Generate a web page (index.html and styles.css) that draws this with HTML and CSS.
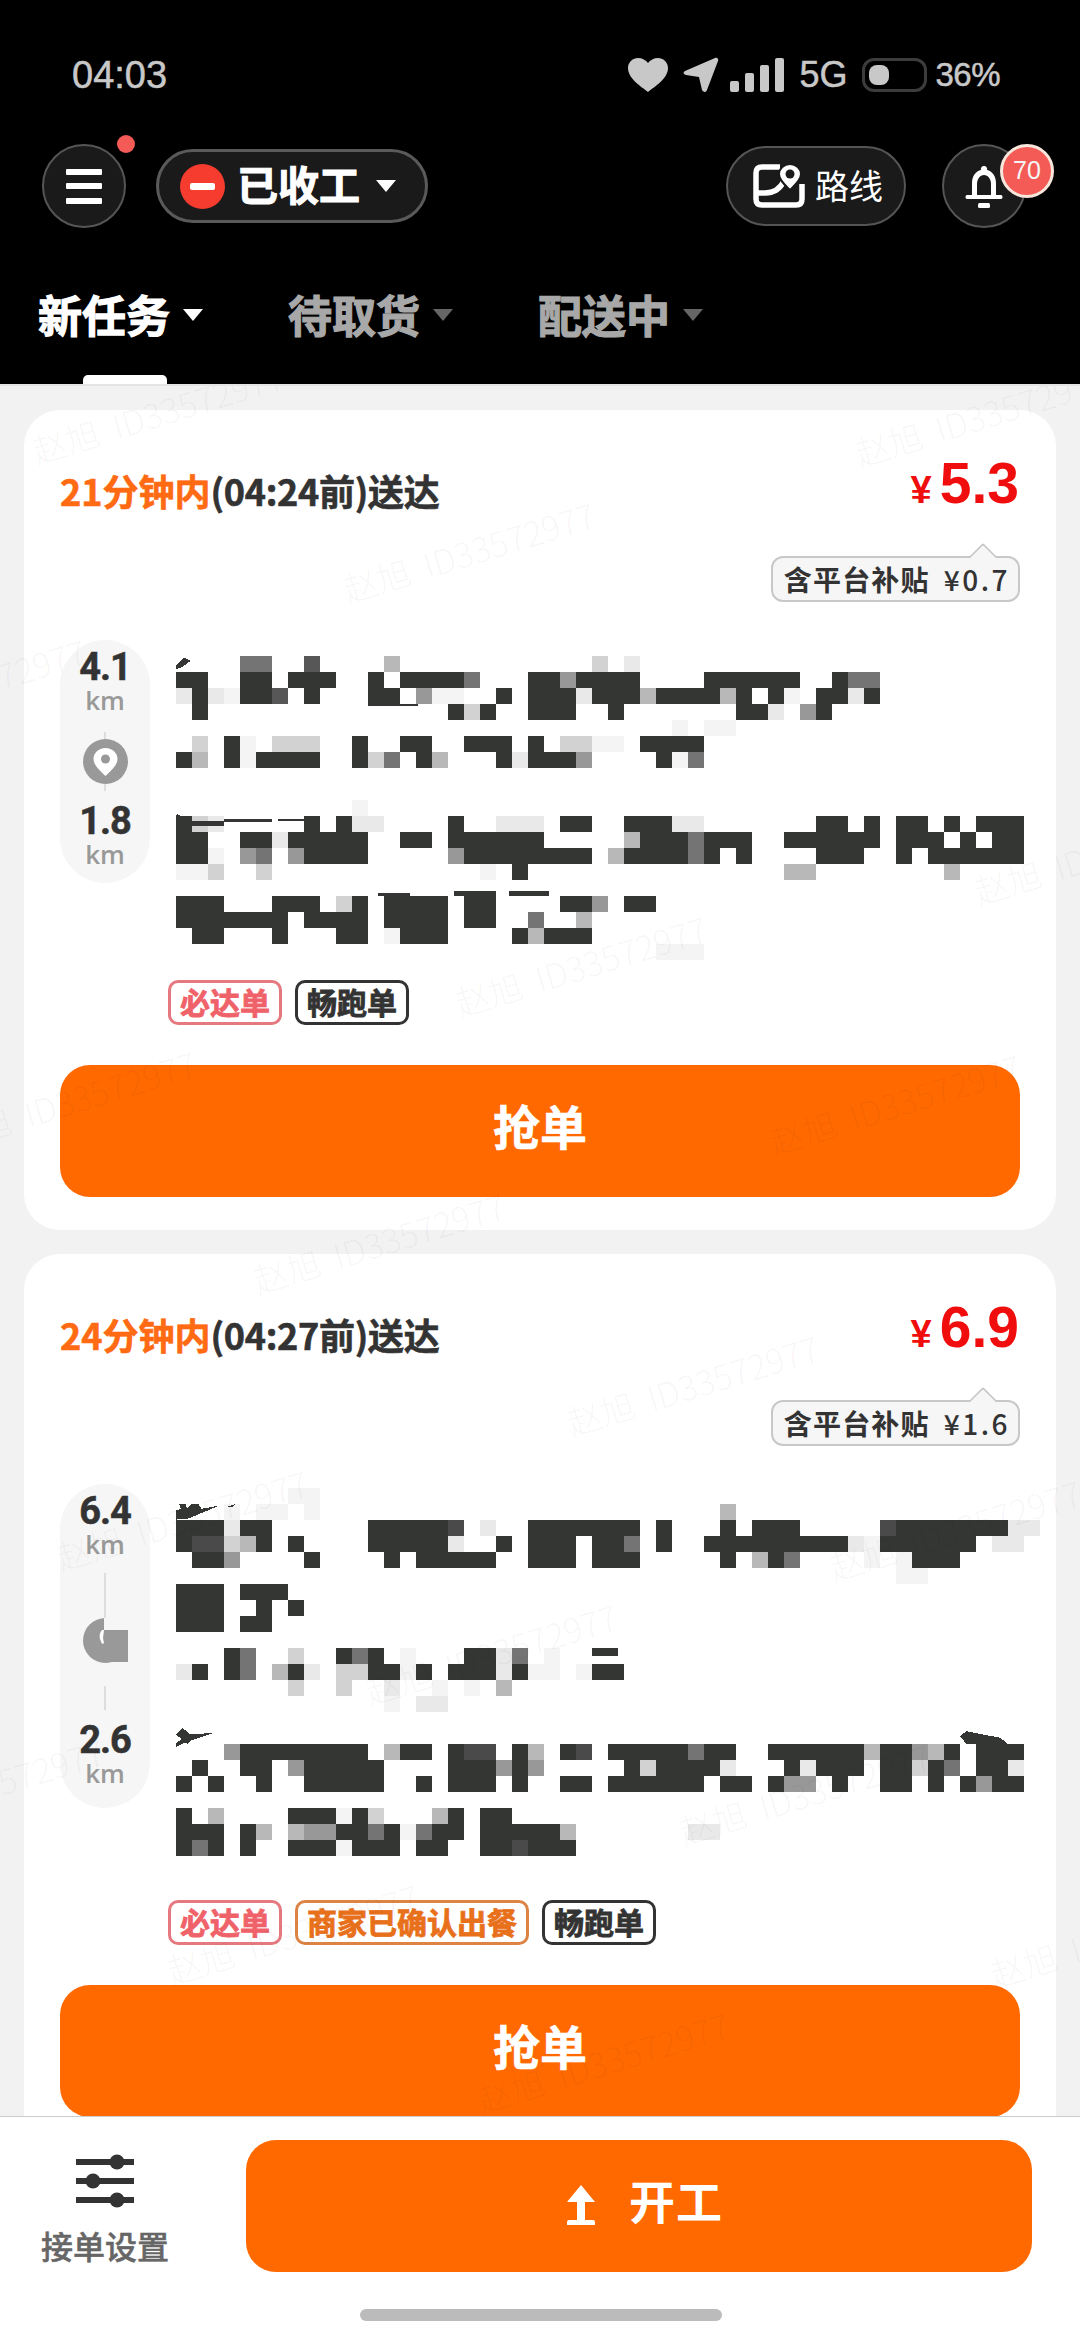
FILE: index.html
```html
<!DOCTYPE html>
<html lang="zh-CN">
  <head>
    <meta charset="UTF-8" />
    <meta name="viewport" content="width=device-width, initial-scale=1.0" />
    <title>新任务</title>
    <link rel="stylesheet" href="styles.css">
  </head>
  <body>
    <div class="phone">
      <header class="top">
        <div class="status">
          <span class="time">04:03</span>
          <div class="status-right">
            <svg class="ic-heart" viewBox="0 0 40 34"><path d="M20 34C14 29 0 21 0 10 0 4 5 0 10 0c4 0 8 2 10 5 2-3 6-5 10-5 5 0 10 4 10 10 0 11-14 19-20 24z"/></svg>
            <svg class="ic-nav" viewBox="0 0 36 36"><path d="M2 14 32 1c2-1 4 1 3 3L24 33c-1 3-4 2-5 0l-3-13-13-2c-3-1-3-3-1-4z"/></svg>
            <div class="signal"><i></i><i></i><i></i><i></i></div>
            <span class="net">5G</span>
            <div class="battery"><i></i></div>
            <span class="pct">36%</span>
          </div>
        </div>

        <div class="toolbar">
          <button class="round menu" type="button">
            <span class="burger"><i></i><i></i><i></i></span>
            <span class="dot"></span>
          </button>
          <button class="state" type="button">
            <span class="minus"><i></i></span>
            <span class="state-text">已收工</span>
            <span class="caret"></span>
          </button>
          <div class="spacer"></div>
          <button class="route-btn" type="button">
            <svg class="ic-map" viewBox="0 0 52 44">
              <path d="M27 3H9Q3 3 3 9v26q0 6 6 6h34q6 0 6-6V20M3 29h9q13 0 19-12" fill="none" stroke="#fff" stroke-width="5.5"/>
              <path d="M37 0c6 0 11 5 11 10 0 6-6 11-11 16-5-5-11-10-11-16 0-5 5-10 11-10z" fill="#fff" stroke="#1a1a1a" stroke-width="2"/>
              <circle cx="37" cy="10" r="4.5" fill="#1a1a1a"/>
            </svg>
            <span>路线</span>
          </button>
          <button class="round bell" type="button">
            <svg class="ic-bell" viewBox="0 0 38 44">
              <path d="M19 2a3 3 0 0 1 3 4c5 1 9 6 9 13v12h5c2 0 2 4 0 4H2c-2 0-2-4 0-4h5V19C7 12 11 7 16 6a3 3 0 0 1 3-4z" fill="#fff"/>
              <path d="M12 31V20c0-5 3-9 7-9s7 4 7 9v11z" fill="#1a1a1a"/>
              <rect x="13" y="39" width="12" height="5" rx="1.5" fill="#fff"/>
            </svg>
            <span class="badge">70</span>
          </button>
        </div>

        <nav class="tabs">
          <a class="tab active">新任务<span class="caret"></span></a>
          <a class="tab">待取货<span class="caret"></span></a>
          <a class="tab">配送中<span class="caret"></span></a>
        </nav>
      </header>

      <main class="feed">
        <article class="card">
          <div class="card-head">
            <h2 class="eta"><em>21分钟内</em>(04:24前)送达</h2>
            <div class="fare">
              <div class="price"><small>¥</small>5.3</div>
              <div class="subsidy">含平台补贴<b>¥0.7</b></div>
            </div>
          </div>
          <div class="route">
            <div class="stats">
              <div class="stat"><strong>4.1</strong><span>km</span></div>
              <div class="stop">
                <i></i>
                <svg class="ic-pin" viewBox="0 0 45 45">
                  <circle cx="22.5" cy="22.5" r="22.5" fill="#999"/>
                  <path d="M22.5 9c7 0 12 5 12 11 0 6-6 11-12 17-6-6-12-11-12-17 0-6 5-11 12-11z" fill="#fff"/>
                  <circle cx="22.5" cy="20" r="4.5" fill="#999"/>
                </svg>
                <i></i>
              </div>
              <div class="stat"><strong>1.8</strong><span>km</span></div>
            </div>
            <!-- address is pixelated in the source, cells are 16px -->
            <svg class="mosaic" width="864" height="320" viewBox="0 -1 54 20" preserveAspectRatio="none">
              <path fill="#f3f4f3" d="M3 2h1v1h-1zM16 2h2v1h-2zM38 2h1v1h-1zM31 4h1v1h-1zM33 4h2v1h-2zM4 5h1v1h-1zM26 5h2v1h-2zM4 6h1v1h-1zM31 6h1v1h-1zM11 9h1v1h-1zM2 12h1v1h-1zM0 13h2v1H0zM19 13h1v1h-1zM13 17h1v1h-1zM30 18h3v1h-3z"/>
              <path fill="#e9e9e9" d="M28 0h1v1h-1zM0 2h1v1H0zM2 2h1v1H2zM25 2h1v1h-1zM42 2h1v1h-1zM37 3h1v1h-1zM21 6h1v1h-1zM2 10h1v1H2zM11 10h2v1h-2zM20 10h3v1h-3zM31 10h2v1h-2zM6 11h1v1H6z"/>
              <path fill="#d2d2d2" d="M26 0h1v1h-1zM18 3h1v1h-1zM1 5h1v1H1zM6 5h3v1H6zM24 5h2v1h-2zM12 6h1v1h-1zM1 10h1v1H1zM2 13h1v1H2zM5 13h1v1H5zM10 15h1v1h-1z"/>
              <path fill="#b8b8b8" d="M13 0h1v1h-1zM29 2h1v1h-1zM34 2h1v1h-1zM1 6h1v1H1zM16 6h1v1h-1zM28 11h1v1h-1zM27 12h1v1h-1zM25 16h1v1h-1zM22 17h1v1h-1zM38 13h2v1h-2zM48 13h1v1h-1z"/>
              <path fill="#979897" d="M24 1h1v1h-1zM15 2h1v1h-1zM39 3h1v1h-1zM25 6h1v1h-1zM4 12h1v1H4zM7 12h1v1H7zM17 12h1v1h-1zM26 15h1v1h-1z"/>
              <path fill="#737473" d="M4 0h2v1H4zM18 1h1v1h-1zM42 1h2v1h-2zM13 6h1v1h-1zM32 6h1v1h-1zM32 11h1v2h-1zM5 12h1v1H5zM22 16h1v1h-1z"/>
              <path fill="#565756" d="M8 0h1v1H8zM6 2h1v1H6z"/>
              <path fill="#343633" d="M0 1h2v1H0zM4 1h2v1H4zM7 1h3v1H7zM12 1h1v1h-1zM14 1h4v1h-4zM22 1h2v1h-2zM25 1h4v1h-4zM33 1h6v1h-6zM41 1h1v1h-1zM1 2h1v1H1zM4 2h2v1H4zM8 2h1v1H8zM12 2h2v1h-2zM20 2h1v1h-1zM22 2h3v1h-3zM26 2h3v1h-3zM30 2h4v1h-4zM35 2h1v1h-1zM37 2h1v1h-1zM40 2h2v1h-2zM43 2h1v1h-1zM1 3h1v1H1zM17 3h1v1h-1zM19 3h1v1h-1zM22 3h3v1h-3zM27 3h1v1h-1zM35 3h2v1h-2zM40 3h1v1h-1zM3 5h1v1H3zM11 5h1v1h-1zM14 5h2v1h-2zM18 5h3v1h-3zM22 5h1v1h-1zM29 5h4v1h-4zM0 6h1v1H0zM3 6h1v1H3zM5 6h4v1H5zM11 6h1v1h-1zM15 6h1v1h-1zM20 6h1v1h-1zM22 6h3v1h-3zM30 6h1v1h-1zM0 10h1v1H0zM8 10h1v1H8zM10 10h1v1h-1zM17 10h1v1h-1zM24 10h2v1h-2zM28 10h3v1h-3zM40 10h2v1h-2zM43 10h1v1h-1zM45 10h2v1h-2zM48 10h1v1h-1zM50 10h3v1h-3zM0 11h2v1H0zM4 11h2v1H4zM7 11h5v1H7zM14 11h2v1h-2zM17 11h6v1h-6zM29 11h3v1h-3zM33 11h3v1h-3zM38 11h6v1h-6zM45 11h3v1h-3zM49 11h1v1h-1zM51 11h2v1h-2zM0 12h2v1H0zM8 12h4v1H8zM18 12h8v1h-8zM28 12h4v1h-4zM33 12h1v1h-1zM35 12h1v1h-1zM40 12h3v1h-3zM45 12h1v1h-1zM47 12h2v1h-2zM49 12h4v1h-4zM21 13h1v1h-1zM0 15h3v1H0zM6 15h3v1H6zM11 15h1v1h-1zM13 15h4v1h-4zM18 15h2v1h-2zM24 15h2v1h-2zM28 15h2v1h-2zM0 16h7v1H0zM8 16h4v1H8zM13 16h4v1h-4zM18 16h2v1h-2zM1 17h2v1H1zM6 17h1v1H6zM10 17h2v1h-2zM14 17h3v1h-3zM21 17h1v1h-1zM23 17h3v1h-3z"/>
              <!-- bits of real glyphs left over the mosaic -->
              <path fill="#343633" d="M-.3 .9.5.1.9.3.4.7zM-.2 10.1.1 9.9 1 10.3H3v.3H1zM3 10.2h3v.2H3zM6.4 10.2h1.6v.1H6.4zM12 3h3.1v.1H12zM12.6 14.8h2v.2h-2zM17.4 14.7h2.6v.3h-2.6zM20.8 14.7h2.5v.3h-2.5z"/>
            </svg>
          </div>
          <ul class="tags">
            <li class="tag tag-red">必达单</li>
            <li class="tag tag-dark">畅跑单</li>
          </ul>
          <button class="grab" type="button">抢单</button>
        </article>

        <article class="card">
          <div class="card-head">
            <h2 class="eta"><em>24分钟内</em>(04:27前)送达</h2>
            <div class="fare">
              <div class="price"><small>¥</small>6.9</div>
              <div class="subsidy">含平台补贴<b>¥1.6</b></div>
            </div>
          </div>
          <div class="route">
            <div class="stats stats-long">
              <div class="stat"><strong>6.4</strong><span>km</span></div>
              <div class="stop">
                <i></i>
                <svg class="ic-pin" viewBox="0 0 45 45">
                  <circle cx="22.5" cy="22.5" r="22.5" fill="#999"/>
                  <path d="M21 0h24v12H21z" fill="#f6f6f6"/>
                  <path d="M19 12c-2 2-3 6-2 9l2 5 2-1-1-5 1-8z" fill="#fff"/>
                  <path d="M21 12h24v32H21z" fill="#999"/>
                </svg>
                <i></i>
              </div>
              <div class="stat"><strong>2.6</strong><span>km</span></div>
            </div>
            <svg class="mosaic" width="864" height="396" viewBox="0 -1.25 54 24.75" preserveAspectRatio="none">
              <path fill="#f3f4f3" d="M7 -1h2v1H7zM3 0h1v1H3zM5 0h2v1H5zM8 0h1v1H8zM43 2h1v1h-1zM43 3h1v1h-1zM45 3h1v1h-1zM45 4h2v1h-2zM14 9h1v1h-1zM23 9h1v1h-1zM14 10h1v1h-1zM22 10h2v1h-2zM25 10h1v1h-1zM16 11h1v1h-1zM18 11h1v1h-1zM13 12h1v1h-1zM10 19h1v1h-1zM14 20h1v1h-1zM10 21h1v1h-1z"/>
              <path fill="#e9e9e9" d="M3 1h1v1H3zM19 1h1v1h-1zM52 1h2v1h-2zM17 2h1v1h-1zM42 2h1v1h-1zM51 2h2v1h-2zM20 9h1v1h-1zM0 10h1v1H0zM8 10h1v1H8zM20 10h1v1h-1zM13 11h1v1h-1zM15 12h2v1h-2zM34 16h1v1h-1zM39 16h1v1h-1zM52 16h1v1h-1zM32 20h2v1h-2z"/>
              <path fill="#d2d2d2" d="M3 2h1v1H3zM7 9h1v1H7zM10 10h2v1h-2zM7 11h1v1H7zM10 11h1v1H10zM29 16h1v1h-1zM46 16h1v1h-1zM12 19h1v1h-1z"/>
              <path fill="#b8b8b8" d="M34 0h1v1h-1zM4 2h1v1H4zM36 3h1v1h-1zM6 10h1v1H6zM20 11h1v1h-1zM13 15h1v1h-1zM22 15h1v1h-1zM43 15h1v1h-1zM47 15h1v1h-1zM2 19h1v1H2zM16 19h1v1h-1zM5 20h1v1H5zM7 20h1v1H7zM24 20h1v1h-1z"/>
              <path fill="#979897" d="M3 3h1v1H3zM3 15h1v1H3zM46 15h1v1h-1zM7 16h1v1H7zM20 16h1v1h-1zM22 16h1v1h-1zM38 17h2v1h-2zM50 17h1v1h-1zM8 20h2v1H8z"/>
              <path fill="#737473" d="M28 2h1v1h-1zM38 3h1v1h-1zM4 9h1v2H4zM11 9h1v1h-1zM21 9h1v1h-1zM32 15h1v1h-1zM48 16h1v1h-1zM12 20h1v1h-1zM15 20h1v1h-1zM1 21h1v1H1z"/>
              <path fill="#494a49" d="M17 1h1v1h-1zM44 1h1v1h-1zM1 2h2v1H1zM18 15h2v1h-2zM25 15h1v1h-1zM21 21h1v1h-1z"/>
              <path fill="#343633" d="M0 1h3v1H0zM4 1h2v1H4zM12 1h5v1h-5zM22 1h7v1h-7zM30 1h1v1h-1zM34 1h1v1h-1zM36 1h3v1h-3zM45 1h7v1h-7zM0 2h1v1H0zM5 2h1v1H5zM7 2h1v1H7zM12 2h5v1h-5zM20 2h1v1h-1zM22 2h3v1h-3zM26 2h2v1h-2zM30 2h1v1h-1zM33 2h9v1h-9zM44 2h6v1h-6zM1 3h2v1H1zM8 3h1v1H8zM13 3h1v1h-1zM15 3h5v1h-5zM22 3h3v1h-3zM26 3h3v1h-3zM34 3h1v1h-1zM37 3h1v1h-1zM46 3h3v1h-3zM0 5h3v1H0zM4 5h3v1H4zM0 6h3v1H0zM5 6h1v1H5zM7 6h1v1H7zM0 7h3v1H0zM4 7h2v1H4zM3 9h1v1H3zM10 9h1v1h-1zM12 9h1v1h-1zM18 9h2v1h-2zM1 10h1v1H1zM3 10h1v1H3zM7 10h1v1H7zM12 10h2v1h-2zM15 10h1v1h-1zM17 10h3v1h-3zM21 10h1v1h-1zM26 10h2v1h-2zM4 15h8v1H4zM14 15h2v1h-2zM17 15h1v1h-1zM21 15h1v1h-1zM24 15h1v1h-1zM27 15h5v1h-5zM33 15h2v1h-2zM37 15h6v1h-6zM44 15h2v1h-2zM48 15h1v1h-1zM50 15h3v1h-3zM1 16h1v1H1zM4 16h2v1H4zM8 16h5v1H8zM17 16h3v1h-3zM21 16h1v1h-1zM28 16h1v1h-1zM30 16h4v1h-4zM38 16h1v1h-1zM40 16h3v1h-3zM44 16h2v1h-2zM47 16h1v1h-1zM50 16h2v1h-2zM0 17h1v1H0zM2 17h1v1H2zM5 17h1v1H5zM8 17h5v1H8zM15 17h1v1h-1zM17 17h3v1h-3zM21 17h1v1h-1zM24 17h2v1h-2zM27 17h6v1h-6zM34 17h2v1h-2zM37 17h1v1h-1zM41 17h1v1h-1zM44 17h2v1h-2zM47 17h1v1h-1zM49 17h1v1h-1zM51 17h2v1h-2zM0 19h1v1H0zM7 19h3v1H7zM11 19h1v1h-1zM17 19h1v1h-1zM19 19h2v1h-2zM0 20h3v1H0zM4 20h1v1H4zM10 20h2v1h-2zM13 20h1v1h-1zM16 20h2v1h-2zM19 20h5v1h-5zM0 21h1v1H0zM2 21h1v1H2zM4 21h1v1H4zM7 21h3v1H7zM11 21h3v1h-3zM15 21h2v1h-2zM19 21h2v1h-2zM22 21h3v1h-3z"/>
              <!-- leftover glyph bits -->
              <path fill="#343633" d="M-.3 1 0 .4.3 .3.2 0 .6 0 .7 .3 1 0 1.4 0 1.6 .3 2.7 .1 .8 .9zM3.1 .2 3.7 0 3.5 .2zM26 9h1.6v.5H26zM0 14.4.4 14l.5.4L2.4 14.3.9 14.8.7 15zM-.1 15 .5 14.6.6 14.9 0 15.2zM49 14.5 49.4 14.2 50.4 14.4 51.5 14.6 52 15H49.4z"/>
            </svg>
          </div>
          <ul class="tags">
            <li class="tag tag-red">必达单</li>
            <li class="tag tag-orange">商家已确认出餐</li>
            <li class="tag tag-dark">畅跑单</li>
          </ul>
          <button class="grab" type="button">抢单</button>
        </article>

        <!-- account watermark tiled over the list -->
        <div class="marks">
          <span class="wm wm-a">赵旭 ID33572977</span>
          <span class="wm wm-b">赵旭 ID33572977</span>
          <span class="wm wm-c">赵旭 ID33572977</span>
          <span class="wm wm-d">赵旭 ID33572977</span>
          <span class="wm wm-e">赵旭 ID33572977</span>
          <span class="wm wm-f">赵旭 ID33572977</span>
          <span class="wm wm-g">赵旭 ID33572977</span>
          <span class="wm wm-h">赵旭 ID33572977</span>
          <span class="wm wm-i">赵旭 ID33572977</span>
          <span class="wm wm-j">赵旭 ID33572977</span>
          <span class="wm wm-k">赵旭 ID33572977</span>
          <span class="wm wm-l">赵旭 ID33572977</span>
          <span class="wm wm-m">赵旭 ID33572977</span>
          <span class="wm wm-n">赵旭 ID33572977</span>
          <span class="wm wm-o">赵旭 ID33572977</span>
          <span class="wm wm-p">赵旭 ID33572977</span>
          <span class="wm wm-q">赵旭 ID33572977</span>
          <span class="wm wm-r">赵旭 ID33572977</span>
        </div>
      </main>

      <footer class="bottom">
        <div class="bottom-row">
          <div class="settings">
            <svg class="ic-sliders" viewBox="0 0 58 54">
              <path d="M0 8h58M0 27h58M0 46h58" stroke="#333" stroke-width="6"/>
              <circle cx="41" cy="8" r="7.5" fill="#333"/>
              <circle cx="17" cy="27" r="7.5" fill="#333"/>
              <circle cx="41" cy="46" r="7.5" fill="#333"/>
            </svg>
            <span>接单设置</span>
          </div>
          <button class="start" type="button">
            <svg class="ic-up" viewBox="0 0 28 40"><path d="M14 0 28 17H18V35H26Q28 35 28 37V40H0V37Q0 35 2 35H10V17H0z" fill="#fff"/></svg>
            <span>开工</span>
          </button>
        </div>
        <div class="home-bar"></div>
      </footer>
    </div>
  </body>
</html>
```

FILE: styles.css
```css
* {
  box-sizing: border-box;
}

body {
  margin: 0;
  font-family: "Noto Sans CJK SC", "Liberation Sans", sans-serif;
}

button {
  font-family: inherit;
  border: 0;
  padding: 0;
}

.phone {
  width: 1080px;
  height: 2344px;
  display: flex;
  flex-direction: column;
  overflow: hidden;
  background: #fff;
}

/* header */
.top {
  height: 384px;
  flex: none;
  background: #000;
  color: #fff;
}

.status {
  height: 144px;
  padding: 57px 80px 0 72px;
  display: flex;
  justify-content: space-between;
  align-items: flex-start;
  font-family: "Liberation Sans", sans-serif;
  color: #c8c8c8;
  -webkit-text-stroke: 0.5px #c8c8c8;
}

.time {
  font-size: 38px;
  line-height: 36px;
}

.status-right {
  display: flex;
  align-items: center;
  height: 35px;
}

.ic-heart {
  width: 40px;
  height: 34px;
  fill: #c8c8c8;
}

.ic-nav {
  width: 36px;
  height: 36px;
  margin-left: 15px;
  fill: #c8c8c8;
}

.signal {
  display: flex;
  align-items: flex-end;
  gap: 6px;
  height: 34px;
  margin-left: 11px;
}

.signal i {
  display: block;
  width: 9px;
  border-radius: 2px;
  background: #c8c8c8;
}

.signal i:nth-child(1) {
  height: 11px;
}

.signal i:nth-child(2) {
  height: 19px;
}

.signal i:nth-child(3) {
  height: 27px;
}

.signal i:nth-child(4) {
  height: 34px;
}

.net {
  font-size: 36px;
  margin-left: 15px;
}

.battery {
  position: relative;
  width: 65px;
  height: 34px;
  margin-left: 15px;
  padding: 4px;
  border: 3px solid #3c3c3c;
  border-radius: 12px;
}

.battery i {
  display: block;
  width: 20px;
  height: 100%;
  border-radius: 8px;
  background: #c8c8c8;
}

.pct {
  font-size: 33px;
  letter-spacing: -0.5px;
  margin-left: 8px;
}

.toolbar {
  height: 84px;
  padding: 0 54px 0 42px;
  display: flex;
  align-items: center;
}

.spacer {
  flex: 1;
}

.round {
  position: relative;
  width: 84px;
  height: 84px;
  flex: none;
  border-radius: 50%;
  border: 2px solid #555;
  background: #1a1a1a;
  display: flex;
  align-items: center;
  justify-content: center;
}

.burger {
  display: flex;
  flex-direction: column;
  gap: 8.5px;
  width: 36px;
}

.burger i {
  display: block;
  height: 6px;
  border-radius: 1px;
  background: #fff;
}

.dot {
  position: absolute;
  top: -11px;
  right: -11px;
  width: 18px;
  height: 18px;
  border-radius: 50%;
  background: #f45b56;
}

.state {
  width: 272px;
  height: 74px;
  margin-left: 30px;
  padding-left: 21px;
  display: flex;
  align-items: center;
  border: 3px solid #5a5a5a;
  border-radius: 37px;
  background: #1a1a1a;
  color: #fff;
}

.minus {
  width: 45px;
  height: 45px;
  border-radius: 50%;
  background: #f63b2f;
  display: flex;
  align-items: center;
  justify-content: center;
}

.minus i {
  display: block;
  width: 25px;
  height: 7px;
  border-radius: 2px;
  background: #fff;
}

.state-text {
  font-size: 41px;
  font-weight: 700;
  line-height: 1;
  margin: 0 0 6px 12px;
  -webkit-text-stroke: 1px #fff;
}

.caret {
  display: inline-block;
  width: 0;
  height: 0;
  border-left: 10px solid transparent;
  border-right: 10px solid transparent;
  border-top: 12px solid #fff;
}

.state .caret {
  margin-left: 16px;
}

.route-btn {
  width: 180px;
  height: 80px;
  padding: 0 0 4px 25px;
  display: flex;
  align-items: center;
  gap: 10px;
  border: 2px solid #555;
  border-radius: 40px;
  background: #1a1a1a;
  color: #fff;
  font-size: 34px;
}

.ic-map {
  width: 52px;
  height: 44px;
  flex: none;
  margin-top: 4px;
}

.bell {
  margin-left: 36px;
}

.ic-bell {
  width: 38px;
  height: 44px;
}

.badge {
  position: absolute;
  top: -2px;
  left: 56px;
  width: 54px;
  height: 54px;
  border-radius: 50%;
  border: 3px solid #f7e6dc;
  background: #f45b56;
  color: #f5f5f5;
  font-family: "Liberation Sans", sans-serif;
  font-size: 25px;
  line-height: 47px;
  text-align: center;
}

.tabs {
  height: 156px;
  padding: 61px 0 0 38px;
  display: flex;
  gap: 85px;
}

.tab {
  position: relative;
  height: 95px;
  display: flex;
  align-items: flex-start;
  font-size: 44px;
  font-weight: 700;
  line-height: 50px;
  color: #a8a8a8;
  -webkit-text-stroke: 1.2px #a8a8a8;
}

.tab .caret {
  margin: 20px 0 0 13px;
  border-top-color: #666;
}

.tab.active {
  color: #fff;
  -webkit-text-stroke-color: #fff;
}

.tab.active .caret {
  border-top-color: #fff;
}

.tab.active::after {
  content: "";
  position: absolute;
  left: 45px;
  bottom: 0;
  width: 84px;
  height: 9px;
  border-radius: 5px 5px 0 0;
  background: #fff;
}

/* task list */
.feed {
  position: relative;
  flex: 1;
  min-height: 0;
  overflow: hidden;
  padding: 24px 24px 0;
  display: flex;
  flex-direction: column;
  gap: 24px;
  background: #f2f2f2;
  border-top: 2px solid #e4e4e4;
}

.card {
  flex: none;
  padding: 0 36px 33px;
  background: #fff;
  border-radius: 36px;
}

.card-head {
  height: 230px;
  display: flex;
  justify-content: space-between;
  align-items: flex-start;
}

.eta {
  margin: 55px 0 0;
  font-size: 36px;
  font-weight: 700;
  line-height: 50px;
  letter-spacing: -0.3px;
  color: #333;
  -webkit-text-stroke: 0.6px #333;
}

.eta em {
  font-style: normal;
  letter-spacing: 0;
  color: #ff6a13;
  -webkit-text-stroke: 0.6px #ff6a13;
}

.fare {
  display: flex;
  flex-direction: column;
  align-items: flex-end;
}

.price {
  margin-top: 41px;
  height: 64px;
  font-family: "Liberation Sans", sans-serif;
  font-size: 57px;
  font-weight: 700;
  line-height: 64px;
  color: #f00d0d;
  position: relative;
  left: -1px;
}

.price small {
  font-size: 38px;
  margin-right: 8px;
}

.subsidy {
  position: relative;
  margin-top: 41px;
  height: 46px;
  padding: 0 8px 0 11px;
  display: flex;
  align-items: center;
  border: 2.5px solid #c8c8c8;
  border-radius: 12px;
  background: #f6f6f6;
  font-size: 28px;
  font-weight: 700;
  letter-spacing: 1.2px;
  color: #333;
}

.subsidy b {
  margin-left: 14px;
  font-family: "Noto Sans CJK SC", sans-serif;
  font-weight: 500;
  letter-spacing: 2.5px;
}

.subsidy::before {
  content: "";
  position: absolute;
  top: -11px;
  right: 24px;
  width: 20px;
  height: 20px;
  border-top: 2.5px solid #c8c8c8;
  border-left: 2.5px solid #c8c8c8;
  background: #f6f6f6;
  border-radius: 3px 0 0 0;
  transform: rotate(45deg);
  clip-path: polygon(0 0, 100% 0, 0 100%);
}

.route {
  display: flex;
  align-items: flex-start;
  gap: 26px;
}

.stats {
  width: 90px;
  height: 243px;
  flex: none;
  padding: 8px 0 16px;
  display: flex;
  flex-direction: column;
  align-items: center;
  border-radius: 45px;
  background: #f6f6f6;
}

.stats-long {
  height: 324px;
  padding-bottom: 22px;
}

.stat {
  display: flex;
  flex-direction: column;
  align-items: center;
}

.stat strong {
  font-family: Roboto, sans-serif;
  font-size: 38px;
  font-weight: 700;
  line-height: 38px;
  letter-spacing: -1px;
  color: #333;
  -webkit-text-stroke: 0.5px #333;
}

.stat span {
  margin-top: 1px;
  font-family: "Open Sans", sans-serif;
  font-size: 26px;
  font-weight: 600;
  line-height: 26px;
  color: #999;
}

.stop {
  flex: 1;
  display: flex;
  flex-direction: column;
  align-items: center;
  padding: 19px 0 11px;
}

.stop i {
  display: block;
  width: 2px;
  flex: 1;
  background: #ddd;
}

.stats-long .stop {
  padding-top: 16px;
}

.stats-long .stop i:last-child {
  flex: none;
  height: 24px;
  margin-top: 23px;
}

.ic-pin {
  width: 45px;
  height: 45px;
  flex: none;
}

.mosaic {
  flex: none;
  display: block;
  shape-rendering: crispEdges;
}

.tags {
  list-style: none;
  margin: 20px 0 0;
  padding: 0 0 0 108px;
  display: flex;
  gap: 13px;
}

.tag {
  height: 45px;
  padding: 0 9px;
  border: 3px solid;
  border-radius: 10px;
  font-size: 30px;
  font-weight: 700;
  line-height: 36px;
  -webkit-text-stroke: 0.8px;
}

.tag-red {
  border-color: #e5797f;
  color: #f0626a;
}

.tag-dark {
  border-color: #333;
  color: #333;
}

.tag-orange {
  border-color: #dd8444;
  color: #e8701a;
}

.grab {
  display: block;
  width: 100%;
  height: 132px;
  margin-top: 40px;
  padding-bottom: 14px;
  border-radius: 30px;
  background: #ff6900;
  color: #fff;
  font-size: 47px;
  font-weight: 700;
  -webkit-text-stroke: 0.6px #fff;
}

.marks {
  position: absolute;
  inset: 4px -6px -4px 6px;
  pointer-events: none;
}

.wm {
  position: absolute;
  font-size: 34px;
  line-height: 40px;
  white-space: nowrap;
  word-spacing: 8px;
  font-weight: 300;
  color: rgba(0, 0, 0, 0.045);
  transform: rotate(-17deg);
  transform-origin: 0 100%;
}

.wm-a { left: 33px; top: 40px; }
.wm-b { left: 856px; top: 43px; }
.wm-c { left: 344px; top: 179px; }
.wm-d { left: -165px; top: 316px; }
.wm-e { left: 456px; top: 593px; }
.wm-f { left: 975px; top: 481px; }
.wm-g { left: 770px; top: 731px; }
.wm-h { left: -55px; top: 728px; }
.wm-i { left: 254px; top: 870px; }
.wm-j { left: 568px; top: 1012px; }
.wm-k { left: 57px; top: 1147px; }
.wm-l { left: 830px; top: 1157px; }
.wm-m { left: 366px; top: 1281px; }
.wm-n { left: -147px; top: 1416px; }
.wm-o { left: 680px; top: 1421px; }
.wm-p { left: 168px; top: 1561px; }
.wm-q { left: 478px; top: 1689px; }
.wm-r { left: 991px; top: 1564px; }

/* bottom bar */
.bottom {
  height: 228px;
  flex: none;
  padding-top: 23px;
  display: flex;
  flex-direction: column;
  align-items: center;
  border-top: 1px solid #ccc;
  background: #fff;
}

.bottom-row {
  width: 100%;
  padding: 0 48px 0 42px;
  display: flex;
}

.settings {
  width: 126px;
  margin-right: 78px;
  padding-top: 14px;
  display: flex;
  flex-direction: column;
  align-items: center;
  gap: 15px;
  font-size: 32px;
  font-weight: 500;
  line-height: 44px;
  white-space: nowrap;
  color: #666;
  -webkit-text-stroke: 0.5px #666;
}

.ic-sliders {
  width: 58px;
  height: 54px;
}

.start {
  flex: 1;
  height: 132px;
  padding: 0 0 10px 12px;
  display: flex;
  align-items: center;
  justify-content: center;
  gap: 34px;
  border-radius: 30px;
  background: #ff6900;
  color: #fff;
  font-size: 46px;
  font-weight: 700;
  letter-spacing: 1px;
}

.start span {
  margin-bottom: 4px;
}

.ic-up {
  width: 28px;
  height: 40px;
  margin-top: 8px;
}

.home-bar {
  width: 362px;
  height: 12px;
  margin: 37px 0 0 2px;
  border-radius: 6px;
  background: #bbb;
}
```
